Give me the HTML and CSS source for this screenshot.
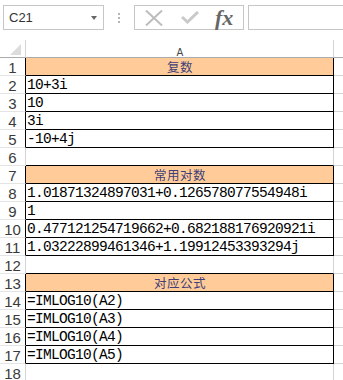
FILE: index.html
```html
<!DOCTYPE html>
<html lang="zh-CN">
<head>
    <meta charset="UTF-8">
    <title>IMLOG10</title>
    <link rel="stylesheet" href="styles.css">
</head>
<body>
    <div class="toolbar">
        <div class="namebox"><span>C21</span><span class="arrow"></span></div>
        <div class="dots"><i></i><i></i><i></i></div>
        <div class="fxbtns">
            <svg class="ico-x" width="18" height="16" viewBox="0 0 18 16"><path d="M1 0.5 L17 15.5 M17 0.5 L1 15.5" stroke="#bdbdbd" stroke-width="2" fill="none"/></svg>
            <svg class="ico-ok" width="18" height="13" viewBox="0 0 18 13"><path d="M1 6 L6.5 11 L17 1" stroke="#c9c9c9" stroke-width="3" fill="none"/></svg>
            <span class="fx">fx</span>
        </div>
        <div class="formula"></div>
    </div>

    <div class="sheet">
        <div class="row head">
            <div class="rh corner"><svg width="11" height="11" viewBox="0 0 11 11"><polygon points="11,0 11,11 0,11" fill="#dcdcdc"/></svg></div>
            <div class="ca">A</div>
            <div class="cb"></div>
        </div>
        <div class="row blk title"><div class="rh">1</div><div class="ca">复数</div><div class="cb"></div></div>
        <div class="row blk"><div class="rh">2</div><div class="ca">10+3i</div><div class="cb"></div></div>
        <div class="row blk"><div class="rh">3</div><div class="ca">10</div><div class="cb"></div></div>
        <div class="row blk"><div class="rh">4</div><div class="ca">3i</div><div class="cb"></div></div>
        <div class="row blk"><div class="rh">5</div><div class="ca">-10+4j</div><div class="cb"></div></div>
        <div class="row pre"><div class="rh">6</div><div class="ca"></div><div class="cb"></div></div>
        <div class="row blk title"><div class="rh">7</div><div class="ca">常用对数</div><div class="cb"></div></div>
        <div class="row blk"><div class="rh">8</div><div class="ca">1.01871324897031+0.126578077554948i</div><div class="cb"></div></div>
        <div class="row blk"><div class="rh">9</div><div class="ca">1</div><div class="cb"></div></div>
        <div class="row blk"><div class="rh">10</div><div class="ca">0.477121254719662+0.682188176920921i</div><div class="cb"></div></div>
        <div class="row blk"><div class="rh">11</div><div class="ca">1.03222899461346+1.19912453393294j</div><div class="cb"></div></div>
        <div class="row pre"><div class="rh">12</div><div class="ca"></div><div class="cb"></div></div>
        <div class="row blk title"><div class="rh">13</div><div class="ca">对应公式</div><div class="cb"></div></div>
        <div class="row blk"><div class="rh">14</div><div class="ca">=IMLOG10(A2)</div><div class="cb"></div></div>
        <div class="row blk"><div class="rh">15</div><div class="ca">=IMLOG10(A3)</div><div class="cb"></div></div>
        <div class="row blk"><div class="rh">16</div><div class="ca">=IMLOG10(A4)</div><div class="cb"></div></div>
        <div class="row blk"><div class="rh">17</div><div class="ca">=IMLOG10(A5)</div><div class="cb"></div></div>
        <div class="row"><div class="rh">18</div><div class="ca"></div><div class="cb"></div></div>
    </div>
</body>
</html>
```

FILE: styles.css
```css
body {
    margin: 0;
    width: 343px;
    height: 380px;
    overflow: hidden;
    background-color: #ffffff;
    font-family: "Liberation Sans", Arial, sans-serif;
    color: #222;
}

/* formula bar */
.toolbar {
    height: 40px;
    box-sizing: border-box;
    padding: 5px 0 0 3px;
    display: flex;
    align-items: flex-start;
}
.namebox {
    width: 101px;
    height: 25px;
    box-sizing: border-box;
    border: 1px solid #c6c6c6;
    display: flex;
    align-items: center;
    justify-content: space-between;
    padding: 0 6px 0 5px;
    font-size: 13px;
    color: #333;
}
.arrow {
    width: 0;
    height: 0;
    border-left: 3.5px solid transparent;
    border-right: 3.5px solid transparent;
    border-top: 4px solid #666;
}
.dots {
    width: 30px;
    height: 25px;
    display: flex;
    flex-direction: column;
    align-items: center;
    justify-content: center;
    gap: 2px;
}
.dots i {
    width: 2px;
    height: 2px;
    background-color: #b5b5b5;
}
.fxbtns {
    width: 110px;
    height: 25px;
    box-sizing: border-box;
    border: 1px solid #c6c6c6;
    display: flex;
    align-items: center;
    padding-left: 10px;
    gap: 17px;
}
.ico-ok {
    margin-left: 1px;
}
.fx {
    font-family: "Liberation Serif", serif;
    font-style: italic;
    font-weight: bold;
    font-size: 22px;
    color: #666;
    margin-left: -1px;
    line-height: 1;
}
.formula {
    flex: 1;
    height: 25px;
    box-sizing: border-box;
    border: 1px solid #c6c6c6;
    border-right: none;
    margin-left: 4px;
}

/* sheet grid */
.row {
    display: grid;
    grid-template-columns: 26px 308px 1fr;
    height: 18px;
}
.row > div {
    box-sizing: border-box;
    border-right: 1px solid #d4d4d4;
    border-bottom: 1px solid #d4d4d4;
    line-height: 17px;
    white-space: nowrap;
    overflow: hidden;
}
.rh {
    text-align: center;
    font-size: 15px;
    color: #3a3a3a;
    padding-top: 1px;
    border-bottom-color: #e4e4e4 !important;
}
.ca {
    font-family: "Liberation Mono", "Noto Sans CJK SC", monospace;
    font-size: 14.5px;
    letter-spacing: -0.7px;
    padding: 1px 0 0 1px;
    color: #000;
}
.cb {
    border-right: none !important;
}

.head > div {
    border-bottom-color: #ababab;
}
.head .corner {
    display: flex;
    align-items: flex-end;
    justify-content: flex-end;
    padding: 0 4px 2px 0;
    border-bottom-color: #ababab !important;
}
.head .ca {
    font-family: "DejaVu Sans", sans-serif;
    font-size: 10px;
    letter-spacing: 0;
    text-align: center;
    color: #444;
    padding-top: 4px;
}

.blk .rh {
    border-right-color: #000;
}
.blk .ca {
    border-right-color: #000;
    border-bottom-color: #000;
}
.pre .ca {
    border-bottom-color: #000;
}

.title .ca {
    background-color: #ffcc99;
    color: #3f3f76;
    text-align: center;
    font-family: "Noto Sans CJK SC", sans-serif;
    font-size: 12.5px;
    letter-spacing: 0.5px;
    padding-top: 0;
}
```
